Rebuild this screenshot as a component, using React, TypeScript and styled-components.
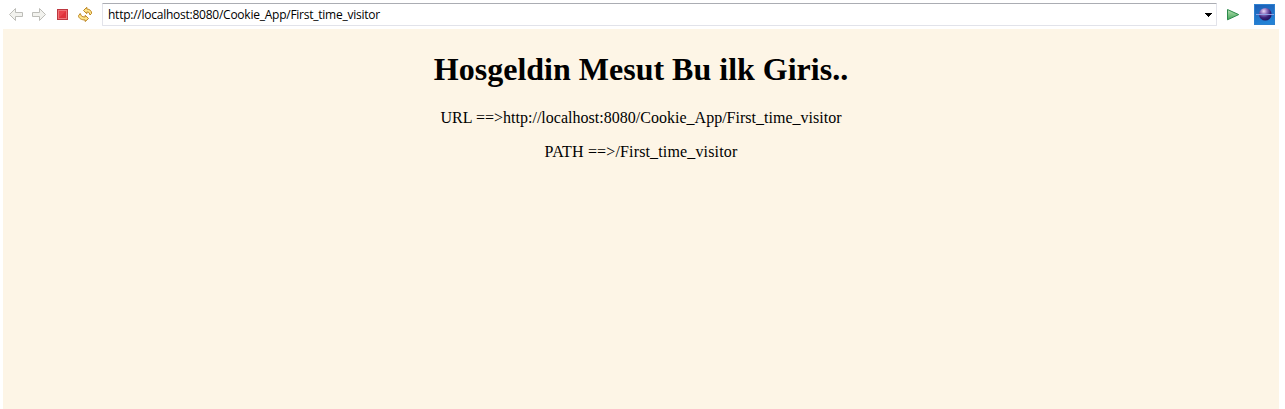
import React from "react";
import styled, { createGlobalStyle } from "styled-components";

const GlobalStyle = createGlobalStyle`
  *, *::before, *::after { box-sizing: border-box; }
  body { margin: 0; background: #fff; overflow: hidden; }
`;

const Browser = styled.div`
  display: flex;
  flex-direction: column;
  height: 100vh;
  padding: 0 6px 0 3px;
  background: #fff;
`;

const Toolbar = styled.header`
  display: flex;
  align-items: flex-start;
  height: 29px;
  padding: 3px 4px 0 4px;
`;

const ToolButton = styled.button<{ $width?: number; $inset?: number }>`
  display: flex;
  flex: none;
  justify-content: flex-start;
  width: ${(p) => p.$width ?? 23}px;
  height: 23px;
  padding: 3px 0 0 ${(p) => p.$inset ?? 1}px;
  border: 0;
  background: transparent;
  svg { display: block; flex: none; }
`;

const AddressBox = styled.div`
  display: flex;
  flex: 1;
  align-items: center;
  height: 23px;
  margin-left: 3px;
  padding: 0 4px 0 5px;
  border: 1px solid #e2e3ea;
  border-top-color: #abadb3;
  border-radius: 1px;
  background: #fff;
`;

const Address = styled.span`
  flex: 1;
  font: 12px/16px "Open Sans", "Noto Sans", sans-serif;
  letter-spacing: -0.245px;
  white-space: nowrap;
  color: #000;
`;

const Logo = styled.div`
  flex: none;
  width: 21px;
  height: 21px;
  margin: 1px 0 0 9px;
  svg { display: block; }
`;

const Page = styled.main`
  flex: 1;
  padding-top: 22px;
  background: #fdf5e6;
  color: #000;
  font-family: "Liberation Serif", "Times New Roman", serif;
  text-align: center;
`;

const Heading = styled.h1`
  margin: 0 0 21px;
  font-size: 32px;
  line-height: 37px;
  font-weight: bold;
`;

const Line = styled.p<{ $tracking?: number }>`
  margin: 0 0 16px;
  font-size: 16px;
  line-height: 18px;
  letter-spacing: ${(p) => p.$tracking ?? 0}px;
`;

const ArrowIcon = ({ forward = false }: { forward?: boolean }) => (
  <svg width="16" height="16" viewBox="0 0 16 16">
    <path
      d="M1.5 8.5 7.5 2.5V6.5H14.5V10.5H7.5V14.5Z"
      transform={forward ? "translate(16 0) scale(-1 1)" : undefined}
      fill="#f2f2ee"
      stroke="#bdbdb8"
      strokeLinejoin="round"
    />
  </svg>
);

const StopIcon = () => (
  <svg width="16" height="16" viewBox="0 0 16 16">
    <rect x="3.5" y="3.5" width="10" height="10" fill="#e9434b" stroke="#bd3840" />
    <rect x="4.5" y="4.5" width="8" height="8" fill="none" stroke="#ee7579" />
    <path d="M5 12 12 5V12Z" fill="#df323b" />
  </svg>
);

const RefreshIcon = () => (
  <svg width="16" height="16" viewBox="0 0 16 16">
    <g fill="#ffe58c" stroke="#bd851f" strokeLinejoin="round">
      <path d="M6.5 4.5 9.8 1.3V3C12.8 3.2 14.9 5 14.5 7.5L13 9L12.2 6.8C11.6 6.1 10.8 5.9 9.8 6V7.7Z" />
      <path d="M11.5 12.5 8.2 15.5V14C4.5 14 1.6 12.3 1.5 9.8L3.2 7.5L4.3 9.8C5.3 10.7 6.5 11 8.2 11V9.3Z" />
    </g>
  </svg>
);

const CaretIcon = () => (
  <svg width="7" height="4" viewBox="0 0 7 4" shapeRendering="crispEdges">
    <path d="M0 0H7V1H6V2H5V3H4V4H3V3H2V2H1V1H0Z" fill="#000" />
  </svg>
);

const GoIcon = () => (
  <svg width="16" height="16" viewBox="0 0 16 16">
    <defs>
      <linearGradient id="go" x1="0" y1="0" x2="0" y2="1">
        <stop offset="0" stopColor="#b5dfb0" />
        <stop offset="1" stopColor="#45a65b" />
      </linearGradient>
    </defs>
    <path d="M2.5 3.5V13.8L13.7 8.6Z" fill="url(#go)" stroke="#2c8a4c" strokeLinejoin="round" />
  </svg>
);

const GlobeIcon = () => (
  <svg width="21" height="21" viewBox="0 0 21 21">
    <defs>
      <linearGradient id="sky" x1="0" y1="0" x2="0.3" y2="1">
        <stop offset="0" stopColor="#1b5cb4" />
        <stop offset="1" stopColor="#2383d6" />
      </linearGradient>
      <radialGradient id="planet" cx="0.38" cy="0.25" r="0.75">
        <stop offset="0" stopColor="#ead8f6" />
        <stop offset="0.35" stopColor="#8f70bd" />
        <stop offset="0.7" stopColor="#3b2279" />
        <stop offset="1" stopColor="#22105c" />
      </radialGradient>
    </defs>
    <rect width="21" height="21" fill="url(#sky)" />
    <rect x="0.5" y="0.5" width="20" height="20" fill="none" stroke="#2d80cf" />
    <circle cx="11.3" cy="10.3" r="6.3" fill="url(#planet)" />
    <path d="M2 10.5H20" stroke="#8f9fe4" />
  </svg>
);

export default function App() {
  return (
    <>
      <GlobalStyle />
      <Browser>
        <Toolbar>
          <ToolButton aria-label="Back"><ArrowIcon /></ToolButton>
          <ToolButton aria-label="Forward"><ArrowIcon forward /></ToolButton>
          <ToolButton aria-label="Stop"><StopIcon /></ToolButton>
          <ToolButton aria-label="Refresh"><RefreshIcon /></ToolButton>
          <AddressBox>
            <Address>http://localhost:8080/Cookie_App/First_time_visitor</Address>
            <CaretIcon />
          </AddressBox>
          <ToolButton aria-label="Go" $width={28} $inset={8}><GoIcon /></ToolButton>
          <Logo><GlobeIcon /></Logo>
        </Toolbar>
        <Page>
          <Heading>Hosgeldin Mesut Bu ilk Giris..</Heading>
          <Line $tracking={0.015}>URL ==&gt;http://localhost:8080/Cookie_App/First_time_visitor</Line>
          <Line $tracking={0.15}>PATH ==&gt;/First_time_visitor</Line>
        </Page>
      </Browser>
    </>
  );
}
